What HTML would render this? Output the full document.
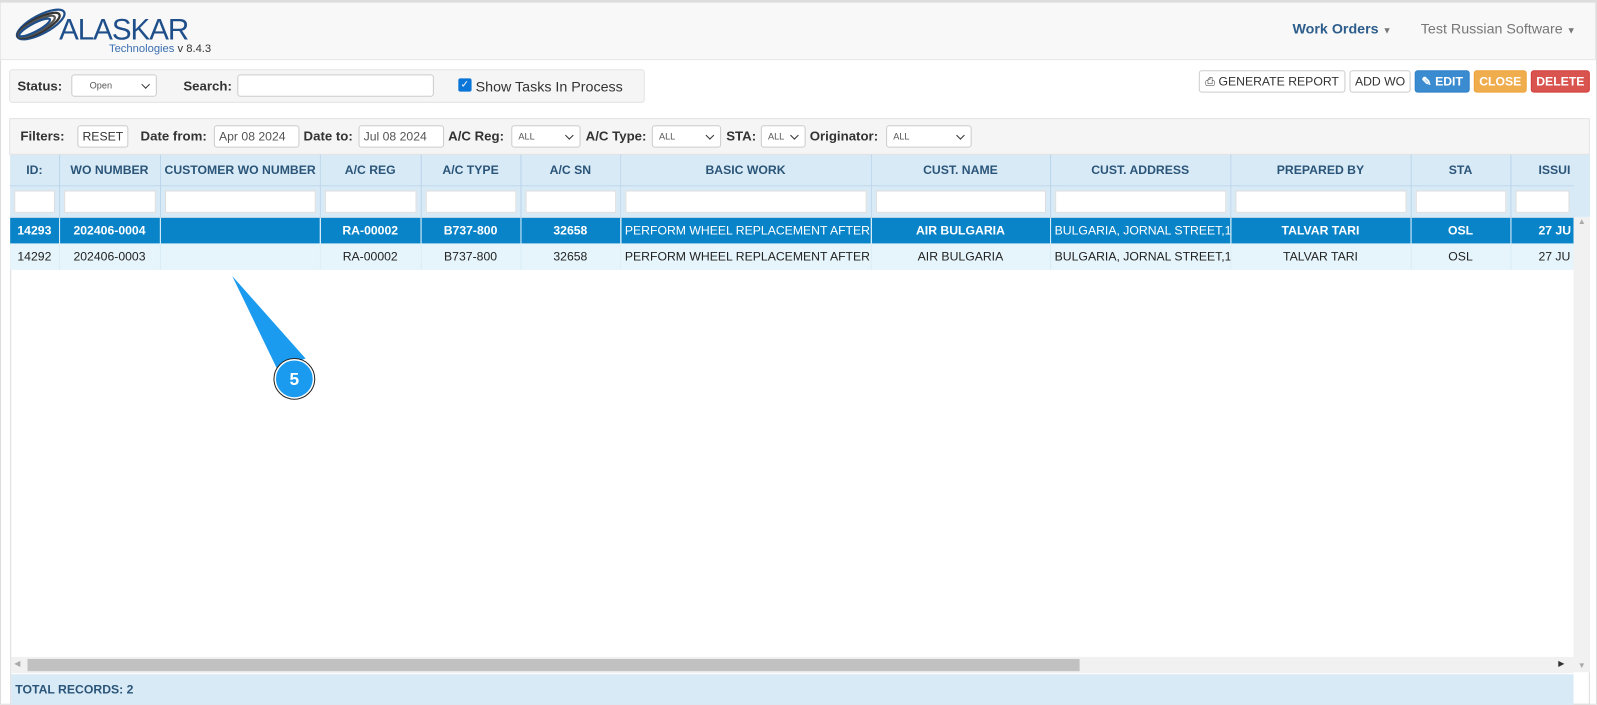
<!DOCTYPE html>
<html><head><meta charset="utf-8"><style>
*{box-sizing:border-box;margin:0;padding:0}
body{width:1597px;height:705px;overflow:hidden;background:#fff;font-family:"Liberation Sans",Arial,sans-serif;font-size:12px;color:#333;position:relative}
#w{position:absolute;left:0;top:0;width:1568px;height:692px;transform:scale(1.0185);transform-origin:0 0}
.a{position:absolute}
.hdr{left:0;top:2px;width:1567px;height:57px;background:#f8f8f8;border:1px solid #e7e7e7}
.btn{position:absolute;top:69px;height:22px;border:1px solid #ccc;border-radius:3px;background:#fff;font-size:12px;line-height:20px;text-align:center;color:#333}
.inp{position:absolute;background:#fff;border:1px solid #ccc;border-radius:3px;height:22px;font-size:12px;line-height:20px;padding-left:4px}
.sel{position:absolute;background:#fff;border:1px solid #ccc;border-radius:3px;height:22px;font-size:9px;line-height:20px;padding-left:6px;color:#555}
.sel:after{content:"";position:absolute;right:7px;top:6px;width:5px;height:5px;border-right:1.5px solid #333;border-bottom:1.5px solid #333;transform:rotate(45deg)}
.lbl{position:absolute;font-weight:bold;font-size:13px;color:#333}
table{border-collapse:collapse;table-layout:fixed;position:absolute;left:10px;top:152px}
td{border-right:1px solid #b7d3ea;white-space:nowrap;overflow:hidden;text-align:center;font-size:12px;padding:0 4px}
tr.h td{background:#d9eaf7;height:30px;font-weight:bold;color:#2a5578;border-bottom:1px solid #b7d3ea}
tr.f td{background:#d9eaf7;height:31px;border-bottom:1px solid #b7d3ea}
tr.f td div{background:#fff;height:22px;border:1px solid #ddd}
tr.s td{background:#0a84c8;color:#fff;font-weight:bold;height:26px;border-right:1px solid #cfe8f7}
tr.r td{background:#e6f5fb;color:#222;height:26px;border-right:1px solid #d7ebf5}
</style></head><body><div id="w">
<div class="a" style="left:0;top:0;width:1568px;height:692px;border:1px solid #ddd;border-top:2px solid #ddd"></div>
<div class="a hdr"></div>
<svg class="a" style="left:10px;top:8px" width="60" height="34" viewBox="0 0 60 34">
<g fill="none" stroke-width="2.2">
<ellipse cx="30" cy="16" rx="26" ry="9" transform="rotate(-28 30 16)" stroke="#1f4f8a"/>
<ellipse cx="28" cy="17" rx="23" ry="7" transform="rotate(-28 28 17)" stroke="#333"/>
<ellipse cx="26" cy="18" rx="20" ry="5.5" transform="rotate(-28 26 18)" stroke="#555"/>
<ellipse cx="24" cy="19" rx="17" ry="4" transform="rotate(-28 24 19)" stroke="#1f4f8a"/>
</g></svg>
<div class="a" style="left:58px;top:14px;font-size:29px;color:#1f4f8a;letter-spacing:-1px">ALASKAR</div>
<div class="a" style="left:107px;top:42px;font-size:11px;color:#3a6fb0">Technologies <span style="color:#333;font-size:11px">v 8.4.3</span></div>
<div class="a" style="left:1269px;top:20px;font-size:14px;font-weight:bold;color:#2c5d8c">Work Orders <span style="font-size:9px;color:#777">▼</span></div>
<div class="a" style="left:1395px;top:20px;font-size:14px;color:#777">Test Russian Software <span style="font-size:9px">▼</span></div>

<div class="a" style="left:9px;top:68px;width:624px;height:33px;background:#f5f5f5;border:1px solid #e3e3e3;border-radius:3px"></div>
<div class="lbl" style="left:17px;top:77px">Status:</div>
<div class="sel" style="left:70px;top:73px;width:84px;padding-left:17px">Open</div>
<div class="lbl" style="left:180px;top:77px">Search:</div>
<div class="inp" style="left:233px;top:73px;width:193px"></div>
<div class="a" style="left:450px;top:77px;width:13px;height:13px;background:#0b76d8;border-radius:2px;color:#fff;font-size:10px;line-height:13px;text-align:center">✓</div>
<div class="a" style="left:467px;top:77px;font-size:14px;color:#333">Show Tasks In Process</div>

<div class="btn" style="left:1177px;width:144px">⎙ GENERATE REPORT</div>
<div class="btn" style="left:1325px;width:60px">ADD WO</div>
<div class="btn" style="left:1389px;width:54px;background:#3a8bd0;border-color:#3080c5;color:#fff;font-weight:bold">✎ EDIT</div>
<div class="btn" style="left:1447px;width:52px;background:#f0ad4e;border-color:#eea236;color:#fff;font-weight:bold">CLOSE</div>
<div class="btn" style="left:1503px;width:58px;background:#d9534f;border-color:#d43f3a;color:#fff;font-weight:bold">DELETE</div>

<div class="a" style="left:9px;top:116px;width:1552px;height:36px;background:#f5f5f5;border:1px solid #e3e3e3"></div>
<div class="lbl" style="left:20px;top:126px">Filters:</div>
<div class="inp" style="left:76px;top:123px;width:50px;padding:0;text-align:center">RESET</div>
<div class="lbl" style="left:138px;top:126px">Date from:</div>
<div class="inp" style="left:210px;top:123px;width:84px;color:#555">Apr 08 2024</div>
<div class="lbl" style="left:298px;top:126px">Date to:</div>
<div class="inp" style="left:352px;top:123px;width:84px;color:#555">Jul 08 2024</div>
<div class="lbl" style="left:440px;top:126px">A/C Reg:</div>
<div class="sel" style="left:502px;top:123px;width:68px">ALL</div>
<div class="lbl" style="left:575px;top:126px">A/C Type:</div>
<div class="sel" style="left:640px;top:123px;width:68px">ALL</div>
<div class="lbl" style="left:713px;top:126px">STA:</div>
<div class="sel" style="left:747px;top:123px;width:44px">ALL</div>
<div class="lbl" style="left:795px;top:126px">Originator:</div>
<div class="sel" style="left:870px;top:123px;width:84px">ALL</div>

<div class="a" style="left:10px;top:152px;width:1551px;height:540px;border:1px solid #ddd"></div>
<table style="width:1535px">
<colgroup><col style="width:48px"><col style="width:99px"><col style="width:157px"><col style="width:99px"><col style="width:98px"><col style="width:98px"><col style="width:246px"><col style="width:176px"><col style="width:177px"><col style="width:177px"><col style="width:98px"><col style="width:62px"></colgroup>
<tr class="h"><td>ID:</td><td>WO NUMBER</td><td>CUSTOMER WO NUMBER</td><td>A/C REG</td><td>A/C TYPE</td><td>A/C SN</td><td>BASIC WORK</td><td>CUST. NAME</td><td>CUST. ADDRESS</td><td>PREPARED BY</td><td>STA</td><td style="text-align:left;padding-left:27px">ISSUI</td></tr>
<tr class="f"><td><div></div></td><td><div></div></td><td><div></div></td><td><div></div></td><td><div></div></td><td><div></div></td><td><div></div></td><td><div></div></td><td><div></div></td><td><div></div></td><td><div></div></td><td><div></div></td></tr>
<tr class="s"><td>14293</td><td>202406-0004</td><td></td><td>RA-00002</td><td>B737-800</td><td>32658</td><td style="text-align:left;font-weight:normal">PERFORM WHEEL REPLACEMENT AFTER</td><td>AIR BULGARIA</td><td style="text-align:left;font-weight:normal">BULGARIA, JORNAL STREET,12</td><td>TALVAR TARI</td><td>OSL</td><td style="text-align:left;padding-left:27px">27 JU</td></tr>
<tr class="r"><td>14292</td><td>202406-0003</td><td></td><td>RA-00002</td><td>B737-800</td><td>32658</td><td style="text-align:left">PERFORM WHEEL REPLACEMENT AFTER</td><td>AIR BULGARIA</td><td style="text-align:left">BULGARIA, JORNAL STREET,12</td><td>TALVAR TARI</td><td>OSL</td><td style="text-align:left;padding-left:27px">27 JU</td></tr>
</table>
<div class="a" style="left:1545px;top:152px;width:16px;height:61px;background:#d9eaf7"></div>
<div class="a" style="left:1545px;top:213px;width:16px;height:447px;background:#f1f1f1;color:#aaa;font-size:8px;text-align:center">▲<div style="position:absolute;bottom:2px;width:16px">▼</div></div>
<div class="a" style="left:11px;top:645px;width:1534px;height:16px;background:#f1f1f1"></div>
<div class="a" style="left:27px;top:647px;width:1033px;height:12px;background:#c1c1c1"></div>
<div class="a" style="left:14px;top:647px;font-size:8px;color:#aaa">◀</div>
<div class="a" style="left:1530px;top:647px;font-size:8px;color:#333">▶</div>
<div class="a" style="left:11px;top:662px;width:1534px;height:30px;background:#d9eaf7;font-weight:bold;color:#2a5578;font-size:12px;line-height:30px;padding-left:4px">TOTAL RECORDS: 2</div>

<svg class="a" style="left:0;top:0" width="400" height="400">
<polygon points="228,271 272,362 300,352" fill="#1a9bf0"/>
<circle cx="289" cy="372" r="19" fill="#1a9bf0" stroke="#fff" stroke-width="2"/>
<circle cx="289" cy="372" r="20" fill="none" stroke="#222" stroke-width="1"/>
<text x="289" y="378" text-anchor="middle" font-family="Liberation Sans" font-weight="bold" font-size="17" fill="#fff">5</text>
</svg>
</div></body></html>
